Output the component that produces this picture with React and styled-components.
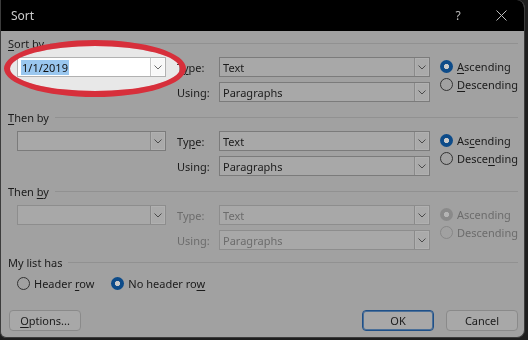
import React from 'react';
import styled, { createGlobalStyle, css } from 'styled-components';

const GlobalStyle = createGlobalStyle`
  html, body {
    margin: 0;
    padding: 0;
    background: #1e1e1e;
  }
  body {
    font-family: 'Noto Sans', 'Open Sans', sans-serif;
    font-size: 11px;
    color: #1b1b1b;
  }
`;

const Window = styled.div`
  position: relative;
  width: 525px;
  height: 338px;
  box-sizing: border-box;
  background: #a1a1a1;
  border: 1px solid #3c3c3c;
  border-top: none;
  border-radius: 0 8px 8px 6px;
  overflow: hidden;
`;

const TitleBar = styled.div`
  height: 31px;
  background: #000;
  display: flex;
  align-items: center;
  padding-left: 10px;
  color: #cdcdcd;
  font-size: 12px;
`;

const Title = styled.div`
  flex: 1;
  margin-top: -1px;
`;

const TitleButton = styled.div`
  width: ${({ $width }) => $width}px;
  height: 31px;
  display: flex;
  align-items: center;
  justify-content: center;
  color: #bdbdbd;
  font-size: 12px;
`;

const Body = styled.div`
  padding: 5px 6px 0 7px;
`;

const GroupHeader = styled.div`
  display: flex;
  align-items: center;
  gap: 6px;
  height: 14px;
  margin-top: ${({ $top }) => $top ?? 0}px;

  &::after {
    content: '';
    flex: 1;
    height: 1px;
    background: #919191;
    margin-top: 1px;
  }
`;

const Key = styled.span`
  text-decoration: underline;
  text-underline-offset: 2px;
`;

const SortRow = styled.div`
  display: flex;
  align-items: flex-start;
  margin: 7px 0 0 9px;
`;

const Combo = styled.div`
  box-sizing: border-box;
  width: ${({ $width }) => $width}px;
  height: 20px;
  display: flex;
  align-items: stretch;
  border: 1px solid ${({ $disabled }) => ($disabled ? '#8d8d8d' : '#7b7b7b')};
  background: ${({ $light }) => ($light ? '#b2b2b2' : '#a8a8a8')};
  color: ${({ $disabled }) => ($disabled ? '#6c6c6c' : '#1b1b1b')};
`;

const ComboText = styled.div`
  flex: 1;
  display: flex;
  align-items: center;
  padding-left: 3px;
  white-space: nowrap;
  overflow: hidden;
`;

const Selected = styled.span`
  background: #6b8aa6;
  color: #0c0c0c;
  padding: 0 1px;
  line-height: 15px;
`;

const DropButton = styled.div`
  width: 15px;
  display: flex;
  align-items: center;
  justify-content: center;
  box-sizing: border-box;
  border-left: 1px solid #8a8a8a;
  box-shadow: inset 0 0 0 1px ${({ $light }) => ($light ? '#aeaeae' : '#b0b0b0')};
  background: ${({ $light }) => ($light ? '#acacac' : '#aaaaaa')};
`;

const FieldGrid = styled.div`
  display: grid;
  grid-template-columns: 42px 211px;
  row-gap: 5px;
  margin-left: 11px;
  align-items: center;
`;

const FieldLabel = styled.div`
  color: ${({ $disabled }) => ($disabled ? '#6c6c6c' : '#1b1b1b')};
`;

const RadioColumn = styled.div`
  display: flex;
  flex-direction: column;
  margin-left: 10px;
`;

const RadioOption = styled.div`
  display: flex;
  align-items: center;
  gap: 4px;
  height: 18px;
  color: ${({ $disabled }) => ($disabled ? '#6c6c6c' : '#1b1b1b')};
`;

const RadioDot = styled.span`
  box-sizing: border-box;
  width: 13px;
  height: 13px;
  border-radius: 50%;
  flex-shrink: 0;
  border: 1px solid ${({ $disabled }) => ($disabled ? '#878787' : '#333333')};
  ${({ $checked, $disabled }) =>
    $checked &&
    css`
      border: none;
      background: radial-gradient(
        circle,
        ${$disabled ? '#b4b4b4' : '#c9c9c9'} 0 2.4px,
        ${$disabled ? '#8a8a8a' : '#0d4b89'} 2.9px
      );
    `}
`;

const HeaderRadios = styled.div`
  display: flex;
  gap: 17px;
  margin: 5px 0 0 9px;
`;

const Footer = styled.div`
  display: flex;
  justify-content: space-between;
  margin-top: 18px;
  padding-left: 1px;
`;

const ButtonGroup = styled.div`
  display: flex;
  gap: 12px;
`;

const Button = styled.div`
  box-sizing: border-box;
  width: 72px;
  height: 21px;
  display: flex;
  align-items: center;
  justify-content: center;
  border-radius: 4px;
  background: #a8a8a8;
  border: 1px solid ${({ $primary }) => ($primary ? '#1f5088' : '#8a8a8a')};
  box-shadow: ${({ $primary }) => ($primary ? 'inset 0 0 0 1px #4a6f98' : 'none')};
`;

/* red ring over the first key; inside it the dimmed dialog is lifted back up */
const Spotlight = styled.div`
  position: absolute;
  left: 3px;
  top: 40px;
  width: 182px;
  height: 57px;
  box-sizing: border-box;
  border: 6px solid #d72f3b;
  border-radius: 50%;
  pointer-events: none;

  &::before {
    content: '';
    position: absolute;
    inset: 0;
    border-radius: 50%;
    background: #4e4e4e;
    mix-blend-mode: color-dodge;
  }
`;

const Chevron = () => (
  <svg width="8" height="5" viewBox="0 0 8 5">
    <path d="M0.5 0.5 L4 4 L7.5 0.5" fill="none" stroke="#4a4a4a" strokeWidth="1" />
  </svg>
);

const CloseIcon = () => (
  <svg width="11" height="11" viewBox="0 0 11 11">
    <path d="M0.5 0.5 L10.5 10.5 M10.5 0.5 L0.5 10.5" stroke="#bdbdbd" strokeWidth="1" />
  </svg>
);

const ComboBox = ({ width, text, light, disabled, selected }) => (
  <Combo $width={width} $light={light} $disabled={disabled}>
    <ComboText>{selected ? <Selected>{text}</Selected> : text}</ComboText>
    <DropButton $light={light}>
      <Chevron />
    </DropButton>
  </Combo>
);

const Radio = ({ checked, disabled, children }) => (
  <RadioOption $disabled={disabled}>
    <RadioDot $checked={checked} $disabled={disabled} />
    <span>{children}</span>
  </RadioOption>
);

const sections = [
  {
    title: <><Key>S</Key>ort by</>,
    top: 0,
    first: { text: '1/1/2019', light: true, selected: true },
    type: <>T<Key>y</Key>pe:</>,
    using: 'Using:',
    asc: <><Key>A</Key>scending</>,
    desc: <><Key>D</Key>escending</>,
  },
  {
    title: <><Key>T</Key>hen by</>,
    top: 8,
    first: { text: '' },
    type: <>Ty<Key>p</Key>e:</>,
    using: 'Using:',
    asc: <>As<Key>c</Key>ending</>,
    desc: <>Desce<Key>n</Key>ding</>,
  },
  {
    title: <>Then <Key>b</Key>y</>,
    top: 8,
    disabled: true,
    first: { text: '' },
    type: 'Type:',
    using: 'Using:',
    asc: 'Ascending',
    desc: 'Descending',
  },
];

const App = () => (
  <>
    <GlobalStyle />
    <Window>
      <TitleBar>
        <Title>Sort</Title>
        <TitleButton $width={40}>?</TitleButton>
        <TitleButton $width={46}>
          <CloseIcon />
        </TitleButton>
      </TitleBar>
      <Body>
        {sections.map((s, i) => (
          <div key={i}>
            <GroupHeader $top={s.top}>
              <span>{s.title}</span>
            </GroupHeader>
            <SortRow>
              <ComboBox
                width={150}
                text={s.first.text}
                light={s.first.light}
                selected={s.first.selected}
                disabled={s.disabled}
              />
              <FieldGrid>
                <FieldLabel $disabled={s.disabled}>{s.type}</FieldLabel>
                <ComboBox width={211} text="Text" disabled={s.disabled} />
                <FieldLabel $disabled={s.disabled}>{s.using}</FieldLabel>
                <ComboBox width={211} text="Paragraphs" disabled={s.disabled} />
              </FieldGrid>
              <RadioColumn>
                <Radio checked disabled={s.disabled}>{s.asc}</Radio>
                <Radio disabled={s.disabled}>{s.desc}</Radio>
              </RadioColumn>
            </SortRow>
          </div>
        ))}
        <GroupHeader $top={5}>
          <span>My list has</span>
        </GroupHeader>
        <HeaderRadios>
          <Radio>Header <Key>r</Key>ow</Radio>
          <Radio checked>No header ro<Key>w</Key></Radio>
        </HeaderRadios>
        <Footer>
          <Button>
            <span><Key>O</Key>ptions...</span>
          </Button>
          <ButtonGroup>
            <Button $primary>OK</Button>
            <Button>Cancel</Button>
          </ButtonGroup>
        </Footer>
      </Body>
      <Spotlight />
    </Window>
  </>
);

export default App;
